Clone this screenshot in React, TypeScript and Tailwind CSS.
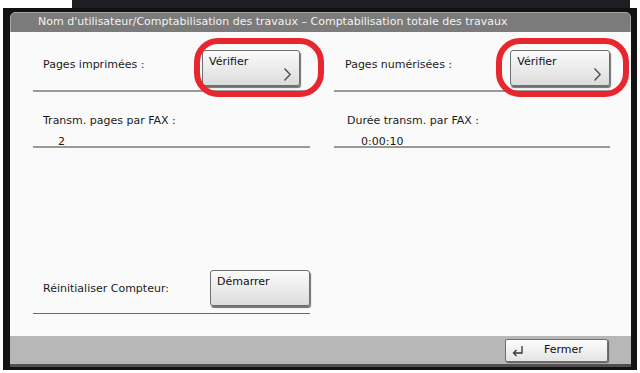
import React from "react";

const font = { fontFamily: '"DejaVu Sans", Verdana, sans-serif' };

function Chevron() {
  return (
    <svg width="9" height="15" viewBox="0 0 9 15" className="absolute right-[7px] bottom-[3px]">
      <path d="M1.5 1.5 L7.2 7.5 L1.5 13.5" fill="none" stroke="#4a4a4a" strokeWidth="1.3" />
    </svg>
  );
}

function PanelButton({ label, chevron, w = "w-[98px]" }: { label: string; chevron?: boolean; w?: string }) {
  return (
    <div
      className={`relative ${w} h-[36px] rounded-[3px] border border-[#6e6e6e] bg-gradient-to-b from-[#fbfbfb] to-[#dcdcdc] pl-[6px] pt-[5px] shadow-[1px_2px_1px_rgba(0,0,0,0.55)] text-[11px] text-[#111] leading-none self-start`}
    >
      <span className="block">{label}</span>
      {chevron && <Chevron />}
    </div>
  );
}

function RedRing({ className }: { className: string }) {
  return <div className={`absolute rounded-[24px] border-[6px] border-[#e8262d] pointer-events-none ${className}`} />;
}

export default function App() {
  return (
    <div className="w-[640px] h-[373px] bg-white overflow-hidden relative" style={font}>
      {/* top strip */}
      <div className="flex h-[8px]">
        <div className="w-[72px] bg-white" />
        <div className="w-[558px] bg-[#1d1d22]" />
      </div>
      {/* black frame */}
      <div className="ml-[3px] w-[634px] h-[362px] bg-[#121212] pl-[7px] pr-[6px] pt-[4px] pb-[3px]">
        <div className="h-full flex flex-col rounded-t-[5px] overflow-hidden">
          <div className="h-[20px] bg-[#7b7b7b] border-t border-l border-r border-[#a8a8a8] rounded-t-[5px] pl-[27px] text-[11px] text-[#f2f2f2] flex items-center">
            Nom d'utilisateur/Comptabilisation des travaux – Comptabilisation totale des travaux
          </div>
          <div className="flex-1 bg-[#fafafa] pl-[23px] flex flex-col text-[11px] text-[#1a1a1a]">
            <div className="grid grid-cols-[277px_276px] gap-x-[24px]">
              {/* row 1 */}
              <div className="h-[60px] pt-[18px] flex border-b-2 border-[#9a9a9a]">
                <span className="w-[169px] pl-[10px] mt-[7px]">Pages imprimées :</span>
                <PanelButton label="Vérifier" chevron />
              </div>
              <div className="h-[60px] pt-[18px] flex border-b-2 border-[#9a9a9a]">
                <span className="w-[177px] pl-[11px] mt-[7px]">Pages numérisées :</span>
                <PanelButton label="Vérifier" chevron w="w-[100px]" />
              </div>
              {/* row 2 */}
              <div className="h-[56px] pt-[21px] border-b-2 border-[#9a9a9a]">
                <div className="pl-[10px]">Transm. pages par FAX :</div>
                <div className="pl-[25px] mt-[4px]">2</div>
              </div>
              <div className="h-[56px] pt-[21px] border-b-2 border-[#9a9a9a]">
                <div className="pl-[13px]">Durée transm. par FAX :</div>
                <div className="pl-[27px] mt-[4px]">0:00:10</div>
              </div>
            </div>
            <div className="flex-1" />
            <div className="w-[277px] h-[44px] flex border-b border-[#6a6a6a] mb-[22px]">
              <span className="w-[177px] pl-[10px] mt-[11px]">Réinitialiser Compteur:</span>
              <PanelButton label="Démarrer" w="w-[100px]" />
            </div>
          </div>
          <div className="h-[31px] bg-[#b7b7b7] border-b-[3px] border-[#505050] flex items-start justify-end pr-[23px] pt-[3px]">
            <div className="w-[103px] h-[23px] rounded-[2px] border border-[#6e6e6e] bg-gradient-to-b from-[#fdfdfd] to-[#e4e4e4] shadow-[1px_1px_1px_rgba(0,0,0,0.5)] flex items-center text-[11px] text-[#111]">
              <svg width="14" height="12" viewBox="0 0 14 12" className="ml-[5px]">
                <path d="M11 1 V8 H3" fill="none" stroke="#333" strokeWidth="1.3" />
                <path d="M5.5 5 L2.5 8 L5.5 11" fill="none" stroke="#333" strokeWidth="1.3" />
              </svg>
              <span className="ml-[19px]">Fermer</span>
            </div>
          </div>
        </div>
      </div>
      <RedRing className="left-[194px] top-[38px] w-[130px] h-[59px]" />
      <RedRing className="left-[496px] top-[38px] w-[133px] h-[59px]" />
    </div>
  );
}
